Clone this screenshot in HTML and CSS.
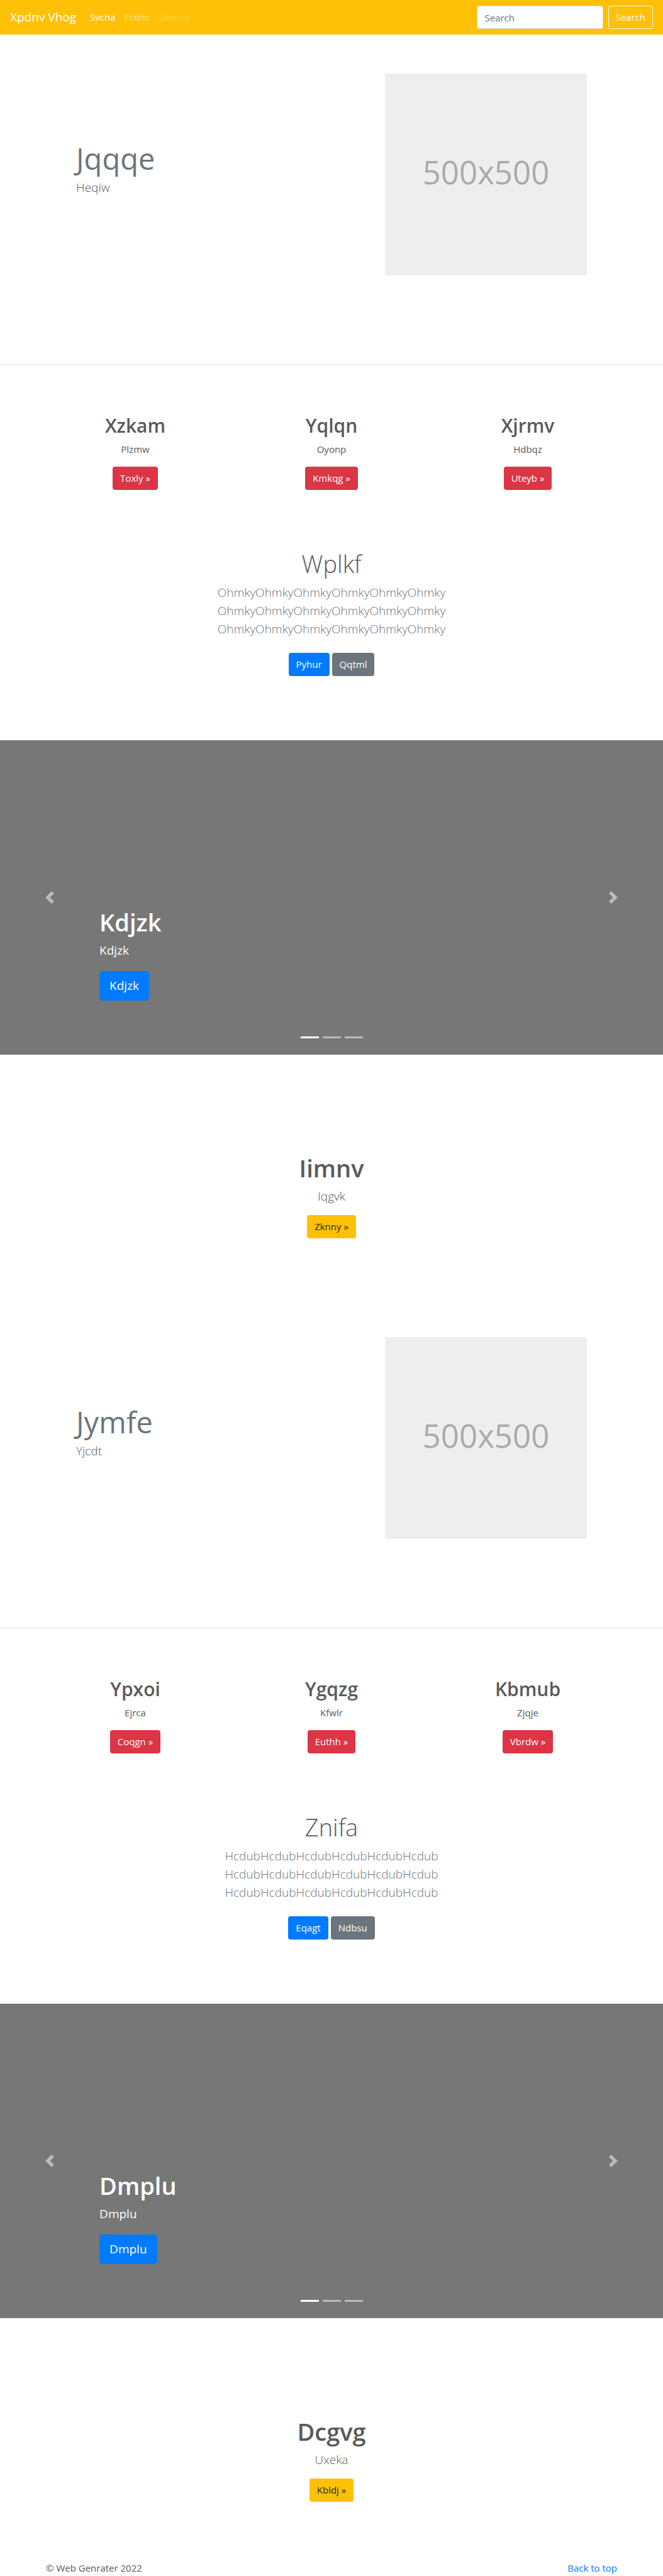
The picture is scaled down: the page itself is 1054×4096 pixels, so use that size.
FILE: index.html
```html
<!DOCTYPE html>
<html lang="en">
<head>
<meta charset="utf-8">
<meta name="viewport" content="width=device-width, initial-scale=1">
<title>Xpdnv Vhog</title>
<link rel="stylesheet" href="styles.css">
</head>
<body id="top">
<header class="navbar">
  <a class="brand" href="#">Xpdnv Vhog</a>
  <nav class="nav-links">
    <a class="nav-link active" href="#">Svcha</a>
    <a class="nav-link" href="#">Fcbhc</a>
    <a class="nav-link disabled" href="#">Gnmcy</a>
  </nav>
  <form class="search">
    <input class="search-input" type="search" placeholder="Search" aria-label="Search">
    <button class="btn btn-outline" type="button">Search</button>
  </form>
</header>
<main>
  <section class="hero">
    <div class="hero-text">
      <h2 class="hero-title">Jqqqe</h2>
      <p class="lead">Heqiw</p>
    </div>
    <div class="placeholder">500x500</div>
  </section>
  <section class="columns">
    <div class="column">
      <h2 class="column-title">Xzkam</h2>
      <p class="column-text">Plzmw</p>
      <a class="btn btn-danger" href="#">Toxly »</a>
    </div>
    <div class="column">
      <h2 class="column-title">Yqlqn</h2>
      <p class="column-text">Oyonp</p>
      <a class="btn btn-danger" href="#">Kmkqg »</a>
    </div>
    <div class="column">
      <h2 class="column-title">Xjrmv</h2>
      <p class="column-text">Hdbqz</p>
      <a class="btn btn-danger" href="#">Uteyb »</a>
    </div>
  </section>
  <section class="intro">
    <h1 class="intro-title">Wplkf</h1>
    <p class="lead muted">OhmkyOhmkyOhmkyOhmkyOhmkyOhmky<br>OhmkyOhmkyOhmkyOhmkyOhmkyOhmky<br>OhmkyOhmkyOhmkyOhmkyOhmkyOhmky</p>
    <div class="actions">
      <a class="btn btn-primary" href="#">Pyhur</a>
      <a class="btn btn-secondary" href="#">Qqtml</a>
    </div>
  </section>
  <section class="carousel">
    <button class="control prev" type="button" aria-label="Previous"><svg class="control-icon" viewBox="0 0 8 8"><path d="M5.25 0l-4 4 4 4 1.5-1.5L4.25 4l2.5-2.5L5.25 0z"/></svg></button>
    <div class="caption">
      <h1 class="caption-title">Kdjzk</h1>
      <p class="caption-text">Kdjzk</p>
      <a class="btn btn-primary btn-lg" href="#">Kdjzk</a>
    </div>
    <button class="control next" type="button" aria-label="Next"><svg class="control-icon" viewBox="0 0 8 8"><path d="M2.75 0l-1.5 1.5L3.75 4l-2.5 2.5L2.75 8l4-4-4-4z"/></svg></button>
    <div class="indicators">
      <button class="indicator current" type="button" aria-label="Slide 1"></button>
      <button class="indicator" type="button" aria-label="Slide 2"></button>
      <button class="indicator" type="button" aria-label="Slide 3"></button>
    </div>
  </section>
  <section class="feature">
    <h1 class="feature-title">Iimnv</h1>
    <p class="lead">Iqgvk</p>
    <a class="btn btn-warning" href="#">Zknny »</a>
  </section>

  <section class="hero">
    <div class="hero-text">
      <h2 class="hero-title">Jymfe</h2>
      <p class="lead">Yjcdt</p>
    </div>
    <div class="placeholder">500x500</div>
  </section>
  <section class="columns">
    <div class="column">
      <h2 class="column-title">Ypxoi</h2>
      <p class="column-text">Ejrca</p>
      <a class="btn btn-danger" href="#">Coqgn »</a>
    </div>
    <div class="column">
      <h2 class="column-title">Ygqzg</h2>
      <p class="column-text">Kfwlr</p>
      <a class="btn btn-danger" href="#">Euthh »</a>
    </div>
    <div class="column">
      <h2 class="column-title">Kbmub</h2>
      <p class="column-text">Zjqje</p>
      <a class="btn btn-danger" href="#">Vbrdw »</a>
    </div>
  </section>
  <section class="intro">
    <h1 class="intro-title">Znifa</h1>
    <p class="lead muted">HcdubHcdubHcdubHcdubHcdubHcdub<br>HcdubHcdubHcdubHcdubHcdubHcdub<br>HcdubHcdubHcdubHcdubHcdubHcdub</p>
    <div class="actions">
      <a class="btn btn-primary" href="#">Eqagt</a>
      <a class="btn btn-secondary" href="#">Ndbsu</a>
    </div>
  </section>
  <section class="carousel">
    <button class="control prev" type="button" aria-label="Previous"><svg class="control-icon" viewBox="0 0 8 8"><path d="M5.25 0l-4 4 4 4 1.5-1.5L4.25 4l2.5-2.5L5.25 0z"/></svg></button>
    <div class="caption">
      <h1 class="caption-title">Dmplu</h1>
      <p class="caption-text">Dmplu</p>
      <a class="btn btn-primary btn-lg" href="#">Dmplu</a>
    </div>
    <button class="control next" type="button" aria-label="Next"><svg class="control-icon" viewBox="0 0 8 8"><path d="M2.75 0l-1.5 1.5L3.75 4l-2.5 2.5L2.75 8l4-4-4-4z"/></svg></button>
    <div class="indicators">
      <button class="indicator current" type="button" aria-label="Slide 1"></button>
      <button class="indicator" type="button" aria-label="Slide 2"></button>
      <button class="indicator" type="button" aria-label="Slide 3"></button>
    </div>
  </section>
  <section class="feature">
    <h1 class="feature-title">Dcgvg</h1>
    <p class="lead">Uxeka</p>
    <a class="btn btn-warning" href="#">Kbldj »</a>
  </section>
</main>
<footer class="footer">
  <span>© Web Genrater 2022</span>
  <a class="footer-link" href="#top">Back to top</a>
</footer>
</body>
</html>
```
FILE: styles.css
```css
* { box-sizing: border-box; }
body {
  margin: 0;
  background: #fff;
  color: #5a5a5a;
  font: 400 15px/23px "Segoe UI", "Open Sans", "Noto Sans", sans-serif;
}
h1, h2, p { margin: 0; }
a { text-decoration: none; }

/* Navigation */
.navbar {
  display: flex;
  align-items: center;
  height: 55px;
  padding: 0 16px;
  background: #ffc107;
}
.brand { margin-right: 22px; color: #fff; font-size: 19px; line-height: 29px; }
.nav-links { display: flex; gap: 14px; }
.nav-link { color: rgba(255, 255, 255, .5); }
.nav-link.active { color: #fff; }
.nav-link.disabled { color: rgba(255, 255, 255, .25); }
.search { display: flex; gap: 8px; margin-left: auto; }
.search-input {
  width: 201px;
  height: 37px;
  padding: 0 12px;
  border: 1px solid #ced4da;
  border-radius: 4px;
  background: #fff;
  color: #495057;
  font: inherit;
}
.search-input::placeholder { color: #6c757d; opacity: 1; }

/* Buttons */
.btn {
  display: inline-block;
  padding: 6px 11px;
  border: 1px solid transparent;
  border-radius: 4px;
  color: #fff;
  font: inherit;
  text-align: center;
}
.btn-outline { border-color: #f8f9fa; background: transparent; color: #f8f9fa; }
.btn-danger { background: #dc3545; }
.btn-primary { background: #007bff; }
.btn-secondary { background: #6c757d; }
.btn-warning { background: #ffc107; color: #212529; }
.btn-lg { padding: 8px 15px; border-radius: 5px; font-size: 19px; line-height: 29px; }

.lead { font-size: 19px; font-weight: 300; line-height: 29px; }
.muted { color: #6c757d; }

/* Hero */
.hero {
  display: flex;
  justify-content: space-between;
  align-items: flex-start;
  padding: 62px 121px 141px;
  border-bottom: 1px solid #e5e5e5;
}
.hero-text { padding-top: 105px; }
.hero-title { margin-bottom: 2px; color: #6c757d; font-size: 47px; font-weight: 400; line-height: 60px; }
.placeholder {
  display: grid;
  place-items: center;
  width: 321px;
  aspect-ratio: 1;
  padding-bottom: 8px;
  background: #eee;
  color: #aaa;
  font-size: 51px;
}

/* Three columns */
.columns { display: grid; grid-template-columns: repeat(3, 1fr); padding: 78px 59px 0; text-align: center; }
.column-title { margin-bottom: 8px; font-size: 30px; font-weight: 600; line-height: 37px; }
.column-text { margin-bottom: 16px; }

/* Centred introduction */
.intro { padding: 94px 16px 102px; text-align: center; }
.intro-title { margin-bottom: 8px; font-size: 38px; font-weight: 300; line-height: 47px; }
.actions { display: flex; justify-content: center; gap: 4px; margin-top: 23px; }

/* Carousel */
.carousel {
  position: relative;
  display: grid;
  grid-template-columns: 15% 1fr 15%;
  height: 500px;
  background: #777;
  color: #fff;
}
.control { padding: 0; border: 0; background: none; opacity: .5; }
.control-icon { display: block; width: 20px; height: 20px; margin: 0 auto; fill: #fff; }
.caption { align-self: end; padding-bottom: 86px; }
.caption-title { margin-bottom: 7px; font-size: 38px; font-weight: 600; line-height: 47px; }
.caption-text { margin-bottom: 18px; font-size: 19px; line-height: 29px; }
.caption .btn { vertical-align: top; }
.indicators { position: absolute; right: 0; bottom: 26px; left: 0; display: flex; justify-content: center; gap: 6px; }
.indicator { width: 29px; height: 3px; padding: 0; border: 0; background: #fff; opacity: .5; }
.indicator.current { opacity: 1; }

/* Feature */
.feature { padding: 157px 16px 95px; text-align: center; }
.feature-title { margin-bottom: 7px; font-size: 38px; font-weight: 600; line-height: 47px; }
.feature .lead { margin-bottom: 15px; }
.feature .btn, .column .btn { vertical-align: top; }

/* Footer */
.footer { display: flex; justify-content: space-between; padding: 0 73px; line-height: 21px; }
.footer-link { color: #007bff; }
```
